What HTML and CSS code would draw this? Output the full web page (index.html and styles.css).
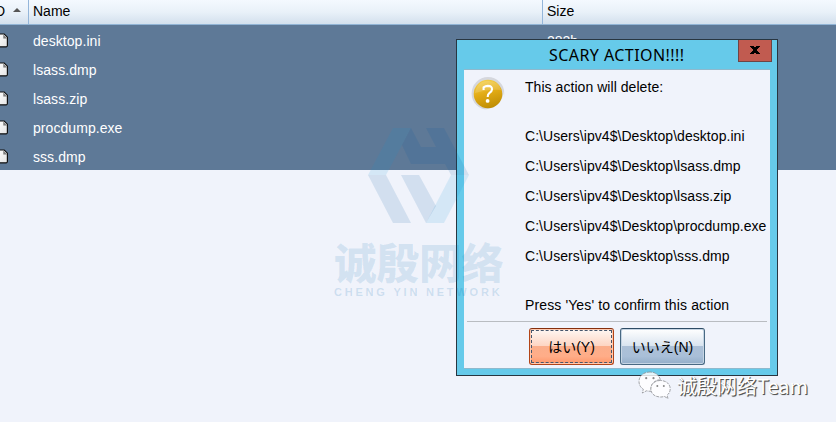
FILE: index.html
```html
<!DOCTYPE html>
<html lang="ja">
<head>
<meta charset="utf-8">
<title>File browser</title>
<link rel="stylesheet" href="styles.css">
</head>
<body>
<svg class="defs" width="0" height="0">
  <linearGradient id="paper" x1="0" y1="0" x2="1" y2="1"><stop offset="0" stop-color="#fff"/><stop offset="1" stop-color="#e4e4e4"/></linearGradient>
  <symbol id="file" viewBox="0 0 8 15">
    <path d="M-3 1H4.2L7.4 4.2V12.6Q7.4 13.8 6.3 13.8H-3Z" fill="url(#paper)" stroke="#111" stroke-width="1.2"/>
    <path d="M3.5 2V5.2H7" fill="#777" stroke="#999" stroke-width=".8"/>
  </symbol>
</svg>
<main class="files">
  <div class="head">
    <div class="col-d"><span>D</span><i class="sort"></i></div>
    <div class="col-name">Name</div>
    <div class="col-size">Size</div>
  </div>
  <div class="row"><svg><use href="#file"/></svg><span class="name">desktop.ini</span><span class="size">282b</span></div>
  <div class="row"><svg><use href="#file"/></svg><span class="name">lsass.dmp</span></div>
  <div class="row"><svg><use href="#file"/></svg><span class="name">lsass.zip</span></div>
  <div class="row"><svg><use href="#file"/></svg><span class="name">procdump.exe</span></div>
  <div class="row"><svg><use href="#file"/></svg><span class="name">sss.dmp</span></div>
</main>

<section class="dialog">
  <div class="title"><span>SCARY ACTION!!!!</span><button class="close"><svg width="10" height="8" viewBox="0 0 10 8"><path d="M0 0h4v1h2V0h4v1H9v1H8v1H7v2h1v1h1v1h1v1H6V7H4v1H0V7h1V6h1V5h1V3H2V2H1V1H0z"/></svg></button></div>
  <div class="panel">
    <div class="content">
      <svg class="question" width="34" height="33" viewBox="0 0 34 33">
        <defs><linearGradient id="gold" x1=".35" y1="0" x2=".65" y2="1"><stop offset="0" stop-color="#f4d04c"/><stop offset=".45" stop-color="#e2ab15"/><stop offset="1" stop-color="#bd8c04"/></linearGradient></defs>
        <circle cx="17" cy="16.5" r="16.4" fill="#d5d7dd"/>
        <path d="M10 33Q31 32 33.5 12V33Z" fill="#f0f3fb"/>
        <circle cx="17" cy="17" r="14.3" fill="url(#gold)"/>
        <path d="M4 16Q6 4 17 4T30 13Q17 12 4 16Z" fill="#fff" opacity=".16"/>
        <path d="M12.6 13V10.3Q14.4 8.9 17 8.9Q21.2 9 21 12.4Q20.9 14.5 18.3 16.2Q16.6 17.4 16.7 20" fill="none" stroke="#fff" stroke-width="2.1"/>
        <circle cx="16.6" cy="23.9" r="1.9" fill="#fff"/>
      </svg>
      <div class="message">
        <p class="lead">This action will delete:</p>
        <p>C:\Users\ipv4$\Desktop\desktop.ini</p>
        <p>C:\Users\ipv4$\Desktop\lsass.dmp</p>
        <p>C:\Users\ipv4$\Desktop\lsass.zip</p>
        <p>C:\Users\ipv4$\Desktop\procdump.exe</p>
        <p>C:\Users\ipv4$\Desktop\sss.dmp</p>
        <p class="confirm">Press 'Yes' to confirm this action</p>
      </div>
    </div>
    <div class="actions">
      <button class="btn yes"><span>はい(Y)</span></button>
      <button class="btn no"><span>いいえ(N)</span></button>
    </div>
  </div>
</section>

<div class="watermark">
  <svg width="102" height="96" viewBox="0 0 102 96">
    <g class="light"><path d="M25 0H43L18 47H0Z"/><path d="M83 47H101L76 95H58Z"/></g>
    <g class="deep"><path d="M43 0L53 19H68L58 0H76L101 47H83L77 36H43L34 17Z"/><path d="M0 47H18L43 95H25Z"/><path d="M33 47H51L68 78L58 95Z"/></g>
  </svg>
  <div class="cn">诚殷网络</div>
  <div class="en">CHENG YIN NETWORK</div>
</div>

<div class="account">
  <svg width="34" height="29" viewBox="0 0 34 29">
    <path d="M12 1C5.5 1 1 5 1 10.5C1 14 2.7 16.5 5.3 18.2L4.3 22L8.5 19.8Q11 20.4 13.5 20.2C11.6 13.5 17 8.6 22.5 8.8C21 3.8 17 1 12 1Z"/>
    <path d="M22.5 9.5C17 9.5 12.8 13 12.8 17.8C12.8 22.7 17 26 22.5 26Q24.6 26 26.3 25.4L30 27.5L29 24.3C31 22.8 32.2 20.5 32.2 17.8C32.2 13 28 9.5 22.5 9.5Z"/>
    <g class="eyes"><circle cx="8.2" cy="7.2" r="1.1"/><circle cx="15.5" cy="7.2" r="1.1"/><circle cx="19.3" cy="15" r="1"/><circle cx="25.8" cy="15" r="1"/></g>
  </svg>
  <span>诚殷网络Team</span>
</div>
</body>
</html>
```
FILE: styles.css
```css
* { box-sizing: border-box; }
body {
  margin: 0;
  width: 836px;
  height: 422px;
  overflow: hidden;
  position: relative;
  background: #f0f3fb;
  font: 14px/16px "Liberation Sans", "Noto Sans CJK JP", sans-serif;
  color: #000;
}
p { margin: 0; }
button { font: inherit; padding: 0; margin: 0; }
.defs { position: absolute; }

.head {
  display: flex;
  height: 25px;
  background: linear-gradient(#f4f9ff, #e9f1f9 50%, #d3e0ed);
  border-bottom: 1px solid #91b4d5;
  line-height: 23px;
}
.col-d { width: 29px; border-right: 1px solid #94b6da; display: flex; }
.col-d span { margin-left: -5px; width: 10px; }
.sort { width: 0; height: 0; border: 4px solid transparent; border-top: 0; border-bottom: 4px solid #555; margin: 8px 0 0 8px; }
.col-name { width: 514px; padding-left: 4px; border-right: 1px solid #94b6da; }
.col-size { padding-left: 4px; }
.row {
  display: flex;
  height: 29px;
  padding-top: 3px;
  align-items: center;
  background: #5e7997;
  color: #fff;
}
.row svg { width: 8px; height: 15px; margin-top: -2px; }
.name { width: 514px; margin-left: 25px; letter-spacing: .06px; }

.dialog {
  position: absolute;
  left: 456px;
  top: 39px;
  width: 322px;
  height: 337px;
  border: 1px solid #283641;
  background: #66caea;
  padding: 0 7px 6px;
  display: flex;
  flex-direction: column;
}
.title {
  height: 29px;
  display: flex;
  justify-content: flex-end;
  font: 16px/30px "Noto Sans", sans-serif;
  letter-spacing: .44px;
}
.title span { width: 189px; white-space: nowrap; }
.close {
  width: 34px;
  height: 22px;
  margin-right: -2px;
  border: 1px solid #6f4444;
  border-top: 0;
  background: #c15b50;
  display: flex;
  align-items: center;
  justify-content: center;
  padding-bottom: 2px;
}
.panel {
  flex: 1;
  background: #f0f3fb;
  border: 1px solid #8fb9cd;
  border-width: 1px 0;
  display: flex;
  flex-direction: column;
}
.content {
  height: 252px;
  margin: 0 3px;
  border-bottom: 1px solid #b9bcc1;
  display: flex;
}
.question { margin: 7px 0 0 4px; flex: none; }
.message { margin: 2px 0 0 20px; white-space: nowrap; line-height: 30px; letter-spacing: .05px; }
.lead { margin-bottom: 19px; }
.confirm { margin-top: 19px; letter-spacing: .12px; }
.actions { display: flex; gap: 6px; padding: 6px 0 0 65px; }
.btn {
  width: 85px;
  height: 37px;
  border-radius: 3px;
  display: flex;
  align-items: center;
  justify-content: center;
  color: #000;
}
.btn span { white-space: nowrap; }
.yes {
  border: 1px solid #b34417;
  border-top-color: #842e0d;
  background: linear-gradient(#fff8f4, #fdd4c1 50%, #fbae8b 50%, #ffad88 78%, #ff9568);
  box-shadow: inset 0 0 0 1px #ffc9b0;
  position: relative;
}
.yes::after { content: ""; position: absolute; inset: 1px; border: 1px dashed #46566c; }
.no {
  border: 1px solid #486983;
  border-top-color: #2d4b65;
  background: linear-gradient(#fff, #d8e3ef 50%, #acc0d7 50%, #a9bfd8 78%, #93adc8);
  box-shadow: inset 0 0 0 1px #c6d5e4;
}

.watermark { position: absolute; left: 334px; top: 128px; width: 170px; pointer-events: none; }
.watermark svg { display: block; margin-left: 34px; }
.light { fill: rgba(20, 150, 210, .12); }
.deep { fill: rgba(0, 90, 160, .125); }
.cn {
  margin-top: 12px;
  font: 900 42.5px/50px "Noto Sans CJK SC", sans-serif;
  color: rgba(10, 110, 175, .13);
  white-space: nowrap;
}
.en {
  font: bold 11px/12px "Liberation Sans", sans-serif;
  letter-spacing: 2.8px;
  color: rgba(10, 110, 175, .17);
  white-space: nowrap;
}

.account {
  position: absolute;
  left: 638px;
  top: 371px;
  display: flex;
  font: 20px/30px "Noto Sans CJK SC", sans-serif;
  color: #fff;
  text-shadow: 1px 1px 0 #555, 1px 1px 1px #777;
  white-space: nowrap;
}
.account span { margin-left: 5px; }
.account path { fill: rgba(255, 255, 255, .82); stroke: #8b8d92; stroke-width: .8; stroke-dasharray: 3 1; }
.eyes { fill: #888; }
```
